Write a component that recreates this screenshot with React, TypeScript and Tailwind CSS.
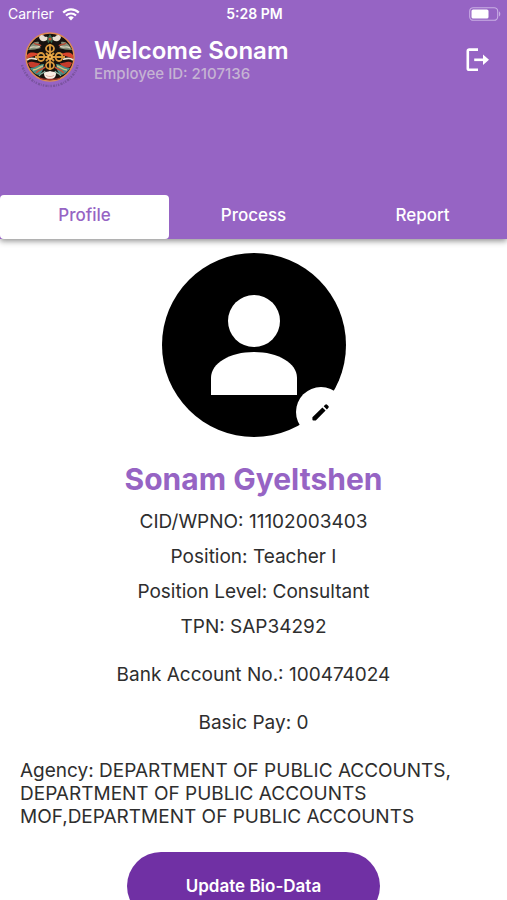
import { useState } from "react";
import clsx from "clsx";

const tabs = ["Profile", "Process", "Report"];

const details = [
  { label: "CID/WPNO", value: "11102003403" },
  { label: "Position", value: "Teacher I" },
  { label: "Position Level", value: "Consultant" },
  { label: "TPN", value: "SAP34292" },
];

const payDetails = [
  { label: "Bank Account No.", value: "100474024" },
  { label: "Basic Pay", value: "0" },
];

const WifiIcon = () => (
  <svg viewBox="0 0 18 13" className="h-[13px] w-[18px]" fill="none" stroke="white" aria-hidden="true">
    <path d="M1.2 4.6a11 11 0 0 1 15.6 0" strokeWidth="2.2" />
    <path d="M4 7.6a7 7 0 0 1 10 0" strokeWidth="2.1" />
    <path d="M9 12.4 6.2 9.6a4 4 0 0 1 5.6 0Z" fill="white" stroke="none" />
  </svg>
);

const BatteryIcon = () => (
  <svg viewBox="0 0 32 14" className="h-[14px] w-8" fill="none" aria-hidden="true">
    <rect x="0.7" y="0.7" width="28" height="12.6" rx="3.6" stroke="#c9aee4" strokeWidth="1.1" />
    <rect x="2.5" y="2.5" width="17" height="9" rx="1.6" fill="white" />
    <path d="M30 4.6c1.7.5 1.7 4.3 0 4.8Z" fill="#c9aee4" />
  </svg>
);

const LogoutIcon = () => (
  <svg viewBox="0 0 24 24" className="size-6" fill="none" stroke="white" strokeWidth="2.6" aria-hidden="true">
    <path d="M12 1.6H3.2a1.4 1.4 0 0 0-1.4 1.4v17.4a1.4 1.4 0 0 0 1.4 1.4H12" />
    <path d="M8.2 11.8h11" />
    <path d="M17 6.6 23 11.8 17 17Z" fill="white" stroke="none" />
  </svg>
);

const Emblem = () => (
  <svg viewBox="0 0 60 60" className="size-[60px]" fill="none" role="img" aria-label="Emblem">
    {/* lettering ring under the seal */}
    <path d="M2 35c3 12 14 21 28 21s25-9 28-22" stroke="#7a549f" strokeWidth="2.4" strokeDasharray="1.4 1.2 2.2 .9 .8 1.1" />
    <circle cx="30" cy="27" r="24" fill="#17120f" stroke="#e08a52" strokeWidth="1.5" />
    {/* clouds at the top */}
    <path d="M19 7c2-3 5-2 6 0 2-1 4 1 2 3-3 2-7 2-8-3Z" fill="#e9dfd2" />
    <path d="M41 7c-2-3-5-2-6 0-2-1-4 1-2 3 3 2 7 2 8-3Z" fill="#e9dfd2" />
    <path d="M27 9l3-5 3 5-1 4h-4Z" fill="#35664c" />
    <circle cx="30" cy="9" r="1.6" fill="#cf4d31" />
    {/* dragons on both sides */}
    <path d="M8 20c3-6 6-9 11-8-1 2 0 5 2 6-4 1-8 2-13 2Z" fill="#85907a" />
    <path d="M52 20c-3-6-6-9-11-8 1 2 0 5-2 6 4 1 8 2 13 2Z" fill="#85907a" />
    <path d="M10 18c4-3 6 1 10-2M50 18c-4-3-6 1-10-2" stroke="#ded5bd" strokeWidth="1.1" />
    <path d="M14 13c3 3 5 0 7 3M46 13c-3 3-5 0-7 3" stroke="#b34a34" strokeWidth="1.4" />
    <path d="M7 25c4-5 8-1 13-2-3 4-7 2-13 6Z" fill="#d9452c" />
    <path d="M53 25c-4-5-8-1-13-2 3 4 7 2 13 6Z" fill="#d9452c" />
    <path d="M7 30c5-4 7 0 10-1M53 30c-5-4-7 0-10-1" stroke="#ece3cf" strokeWidth="1.8" />
    <path d="M8 33c5-3 8 1 12 0-1 4-6 6-10 4Z" fill="#c53c2b" />
    <path d="M52 33c-5-3-8 1-12 0 1 4 6 6 10 4Z" fill="#c53c2b" />
    {/* teal waves */}
    <path d="M10 38c6 0 8-4 14-4-1 5-1 9-6 11-4-1-6-4-8-7Z" fill="#4a9085" />
    <path d="M50 38c-6 0-8-4-14-4 1 5 1 9 6 11 4-1 6-4 8-7Z" fill="#4a9085" />
    <path d="M13 40c5 0 7-4 10-4M47 40c-5 0-7-4-10-4" stroke="#d6c27e" strokeWidth="1.3" />
    <path d="M16 43c3-4 6-3 9-6M44 43c-3-4-6-3-9-6" stroke="#c94e35" strokeWidth="1.7" />
    <path d="M19 46c2-4 5-2 6-5M41 46c-2-4-5-2-6-5" stroke="#86ad9b" strokeWidth="1.4" />
    {/* crossed vajra */}
    <path d="M30 11 42 27 30 40 18 27Z" fill="#17120f" />
    <g stroke="#dc9a3d" strokeWidth="1.8">
      <path d="M30 14v26M15 27h30" />
      <ellipse cx="30" cy="18.5" rx="4" ry="3.4" />
      <ellipse cx="30" cy="35.5" rx="4" ry="3.4" />
      <ellipse cx="21" cy="27" rx="3.4" ry="4" />
      <ellipse cx="39" cy="27" rx="3.4" ry="4" />
      <path d="M26 23l8 8M34 23l-8 8" />
    </g>
    <circle cx="30" cy="27" r="2.7" fill="#eeb54e" />
    <circle cx="30" cy="27" r="1" fill="#7b3b1c" />
    {/* lotus */}
    <path d="M24 43c2-2 4-1 6-2 2 1 4 0 6 2 0 4-2 6-6 6s-6-2-6-6Z" fill="#f8ede4" />
    <path d="M26 45c1 2 7 2 8 0" stroke="#d8a38f" strokeWidth=".8" />
    <path d="M20 48c3 2 16 2 20 0" stroke="#a2362b" strokeWidth="1.3" />
  </svg>
);

const Avatar = () => (
  <div className="relative size-[184px] rounded-full bg-black">
    <svg viewBox="0 0 184 184" className="size-full" fill="white" role="img" aria-label="Profile photo">
      <circle cx="92" cy="68" r="26" />
      <path d="M49 142v-17c0-15 19-26 43-26s43 11 43 26v17Z" />
    </svg>
    <button
      type="button"
      aria-label="Edit photo"
      className="absolute right-0 bottom-0 flex size-[50px] items-center justify-center rounded-full bg-white"
    >
      <svg viewBox="0 0 20 20" className="size-5" fill="black" aria-hidden="true">
        <path d="M1.4 15.2 11.4 5.4l3.2 3.2L4.8 18.6H2.4q-1 0-1-1Z" />
        <path d="m12.7 4.2 1.5-1.5q1-.9 1.9 0l1.3 1.3q.9.9 0 1.8l-1.5 1.6Z" />
      </svg>
    </button>
  </div>
);

interface DetailProps {
  label: string;
  value: string;
}

const Detail = ({ label, value }: DetailProps) => (
  <p>
    {label}: {value}
  </p>
);

export default function App() {
  const [activeTab, setActiveTab] = useState("Profile");

  return (
    <div className="h-screen overflow-hidden bg-white font-['Inter',sans-serif] text-[#2e2e2e]">
      <header className="bg-[#9664c4] text-white shadow-[0_2px_6px_rgba(0,0,0,0.45)]">
        {/* Status bar */}
        <div className="grid h-7 grid-cols-3 items-center pr-1.5 pl-2 text-sm">
          <div className="flex items-center gap-2">
            <span>Carrier</span>
            <WifiIcon />
          </div>
          <span className="text-center font-semibold">5:28 PM</span>
          <div className="flex justify-end">
            <BatteryIcon />
          </div>
        </div>

        {/* Greeting */}
        <div className="flex items-center gap-3.5 pt-0.5 pr-[17px] pl-5">
          <Emblem />
          <div className="flex-1">
            <h1 className="text-2xl leading-7 font-semibold">Welcome Sonam</h1>
            <p className="text-[15px] leading-[18px] font-medium text-[#c5b3d3]">Employee ID: 2107136</p>
          </div>
          <button type="button" aria-label="Log out">
            <LogoutIcon />
          </button>
        </div>

        <nav className="mt-[105px] grid grid-cols-3" role="tablist">
          {tabs.map((tab) => (
            <button
              key={tab}
              type="button"
              role="tab"
              aria-selected={activeTab === tab}
              onClick={() => setActiveTab(tab)}
              className={clsx(
                "h-11 rounded pb-0.5 text-[17px] font-medium",
                activeTab === tab ? "bg-white text-[#9664c4]" : "text-white"
              )}
            >
              {tab}
            </button>
          ))}
        </nav>
      </header>

      <main className="flex flex-col items-center px-5 pt-3.5 text-[19px] leading-[23px]">
        <Avatar />
        <h2 className="mt-6 text-[30px] leading-9 font-bold text-[#9664c4]">Sonam Gyeltshen</h2>

        <div className="mt-[13px] flex flex-col items-center gap-3">
          {details.map((item) => (
            <Detail key={item.label} {...item} />
          ))}
        </div>

        <div className="mt-[25px] flex flex-col items-center gap-[25px]">
          {payDetails.map((item) => (
            <Detail key={item.label} {...item} />
          ))}
        </div>

        <p className="mt-[25px] w-full">
          Agency: DEPARTMENT OF PUBLIC ACCOUNTS,
          <br />
          DEPARTMENT OF PUBLIC ACCOUNTS
          <br />
          MOF,DEPARTMENT OF PUBLIC ACCOUNTS
        </p>

        <button
          type="button"
          className="mt-6 h-[68px] w-[54%] shrink-0 rounded-full bg-[#7030a4] text-[17px] font-semibold text-white"
        >
          Update Bio-Data
        </button>
      </main>
    </div>
  );
}
